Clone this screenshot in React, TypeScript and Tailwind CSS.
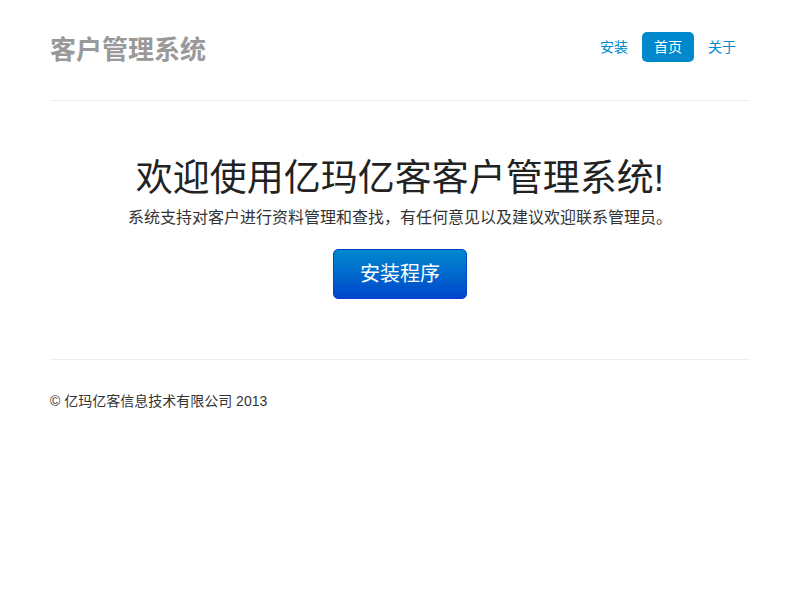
export default function App() {
  const navItems = [
    { label: '安装', active: false },
    { label: '首页', active: true },
    { label: '关于', active: false },
  ]

  return (
    <div className="min-h-screen bg-white font-['Liberation_Sans','Noto_Sans_CJK_SC',sans-serif] text-[#333]">
      <div className="mx-auto w-[700px]">
        {/* Header */}
        <div className="flex h-[100px] items-start justify-between pt-8">
          <h3 className="mt-[3px] text-[26px] leading-[30px] font-bold text-[#999]">
            客户管理系统
          </h3>
          <ul className="flex gap-[2px] mr-[2px] text-[14px]">
            {navItems.map((item) => (
              <li key={item.label}>
                <a
                  href="#"
                  className={`block h-[30px] px-[12px] leading-[30px] rounded-[5px] ${
                    item.active ? 'bg-[#0088cc] text-white' : 'text-[#0088cc]'
                  }`}
                >
                  {item.label}
                </a>
              </li>
            ))}
          </ul>
        </div>

        <div className="h-px bg-[#eeeeee]" />

        {/* Jumbotron */}
        <div className="flex flex-col items-center pt-[58px] pb-[60px]">
          <h1 className="text-[37px] leading-[40px] text-[#222]">
            欢迎使用亿玛亿客客户管理系统!
          </h1>
          <p className="mt-[8px] text-[16px] leading-[22px]">
            系统支持对客户进行资料管理和查找，有任何意见以及建议欢迎联系管理员。
          </p>
          <a
            href="#"
            className="mt-[20px] flex h-[50px] w-[134px] items-center justify-center rounded-[5px] border border-[#0044cc] bg-gradient-to-b from-[#0088cc] to-[#0044cc] text-[20px] text-white"
          >
            安装程序
          </a>
        </div>

        <div className="h-px bg-[#eeeeee]" />

        {/* Footer */}
        <div className="pt-[31px] text-[14px] leading-[20px]">
          © 亿玛亿客信息技术有限公司 2013
        </div>
      </div>
    </div>
  )
}
